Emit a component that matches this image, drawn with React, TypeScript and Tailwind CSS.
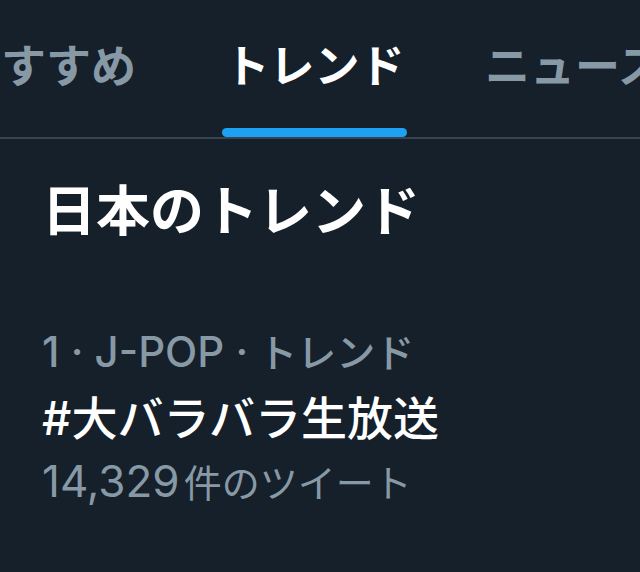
const font = { fontFamily: 'Inter, "Noto Sans CJK JP", "Noto Sans", sans-serif' }

export default function App() {
  return (
    <div className="w-[640px] h-[572px] overflow-hidden bg-[#15202b] text-white" style={font}>
      <nav className="h-[139px] border-b-2 border-[#38444d] flex items-end overflow-hidden">
        <div className="flex items-end -ml-[44px] shrink-0">
          <div className="flex flex-col items-center">
            <span className="text-[45px] font-bold leading-none text-[#8899a6] whitespace-nowrap">おすすめ</span>
            <div className="h-[9px] mt-[39px]" />
          </div>
          <div className="flex flex-col items-center ml-[86px]">
            <span className="text-[45px] font-bold leading-none text-white whitespace-nowrap">トレンド</span>
            <div className="h-[9px] w-[185px] mt-[39px] rounded-full bg-[#1da1f2]" />
          </div>
          <div className="flex flex-col items-center ml-[78px]">
            <span className="text-[45px] font-bold leading-none text-[#8899a6] whitespace-nowrap">ニュース</span>
            <div className="h-[9px] mt-[39px]" />
          </div>
        </div>
      </nav>

      <h2 className="pl-[42px] pt-[46px] text-[54px] font-bold leading-none">日本のトレンド</h2>

      <div className="pl-[42px] pt-[92px]">
        <div className="h-[44px] flex items-baseline text-[#8899a6] whitespace-nowrap">
          <span className="text-[42px] font-medium leading-none">1 · J-POP ·</span>
          <span className="text-[39px] font-medium leading-none ml-[10px]">トレンド</span>
        </div>
        <div className="mt-[20px] text-[46px] font-medium leading-none whitespace-nowrap">#大バラバラ生放送</div>
        <div className="mt-[18px] h-[44px] flex items-baseline text-[#8899a6] whitespace-nowrap">
          <span className="text-[44px] leading-none">14,329</span>
          <span className="text-[38px] leading-none ml-[4px]">件のツイート</span>
        </div>
      </div>
    </div>
  )
}
